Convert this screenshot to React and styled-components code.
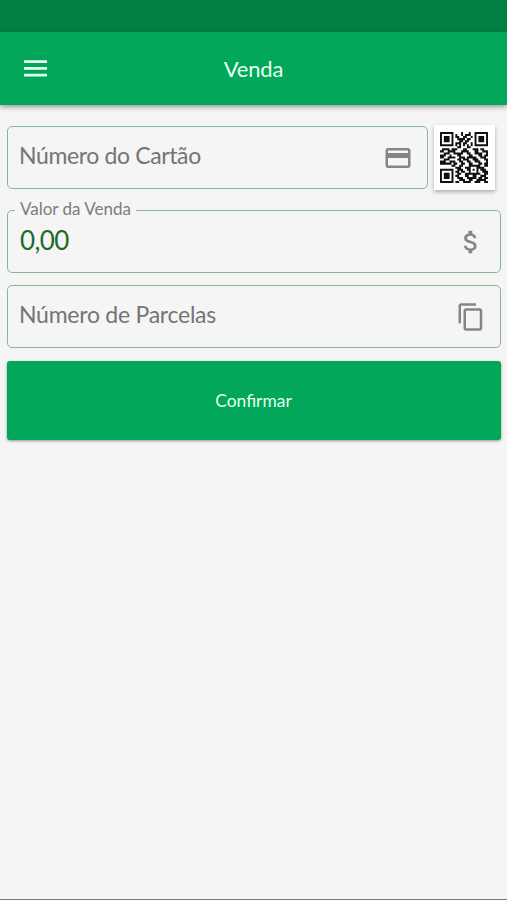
import React from "react";
import styled, { createGlobalStyle } from "styled-components";

const GlobalStyle = createGlobalStyle`
  * { box-sizing: border-box; }
  body { margin: 0; background: #f5f5f5; }
`;

const Screen = styled.div`
  display: flex;
  flex-direction: column;
  height: 900px;
  overflow: hidden;
  background: #f5f5f5;
  border-bottom: 1px solid #777;
  font-family: Lato, "Noto Sans", sans-serif;
`;

const StatusBar = styled.div`
  flex: none;
  height: 32px;
  background: #027f43;
`;

const AppBar = styled.header`
  flex: none;
  display: grid;
  grid-template-columns: 70px 1fr 70px;
  align-items: center;
  height: 73px;
  color: #e6fff0;
  background: #03a759;
  box-shadow: 0 2px 5px rgba(0, 0, 0, 0.38);
`;

const MenuButton = styled.button`
  display: flex;
  justify-content: center;
  padding: 0;
  border: 0;
  background: none;
  color: inherit;
`;

const Title = styled.h1`
  margin: 0;
  text-align: center;
  font-size: 22px;
  line-height: 30px;
  letter-spacing: -0.2px;
  font-weight: 400;
`;

const Form = styled.main`
  display: flex;
  flex-direction: column;
  gap: 12px;
  padding: 21px 6px 0 7px;
`;

const CardRow = styled.div`
  display: flex;
  gap: 6px;
  padding-right: 6px;
  margin-bottom: 9px;
`;

const Field = styled.label`
  position: relative;
  flex: ${(p) => (p.$grow ? "1" : "none")};
  display: flex;
  align-items: center;
  justify-content: space-between;
  height: 63px;
  padding: 0 14px 0 11px;
  border: 1px solid #86b892;
  border-radius: 5px;
  color: #858585;
`;

const FieldText = styled.span`
  padding-bottom: ${(p) => (p.$value ? "4px" : "6px")};
  padding-left: ${(p) => (p.$value ? "1px" : "0")};
  font-size: ${(p) => (p.$value ? "26px" : "23px")};
  line-height: 32px;
  letter-spacing: ${(p) => p.$tracking || "-0.37px"};
  color: ${(p) => (p.$value ? "#24692b" : "#747474")};
  white-space: nowrap;
`;

const FloatingLabel = styled.span`
  position: absolute;
  top: -12px;
  left: 7px;
  padding: 0 5px;
  background: #f5f5f5;
  color: #7d7d7d;
  font-size: 17px;
  line-height: 20px;
  white-space: nowrap;
`;

const QrButton = styled.button`
  flex: none;
  display: flex;
  align-items: center;
  justify-content: center;
  width: 61px;
  height: 65px;
  margin: -1px 0;
  padding: 0 1px 0 0;
  border: 0;
  background: #fff;
  box-shadow: 0 2px 4px rgba(0, 0, 0, 0.3);
`;

const ConfirmButton = styled.button`
  height: 79px;
  margin-top: 1px;
  padding: 0 1px 0 0;
  border: 0;
  border-radius: 3px;
  background: #03a759;
  box-shadow: 0 1px 3px rgba(0, 0, 0, 0.4);
  color: #e6fff0;
  font-family: inherit;
  font-size: 17.4px;
  line-height: 26px;
`;

const Icon = styled.svg`
  flex: none;
  display: block;
  fill: currentColor;
`;

const QR_ROWS = [
  "1111111000010001001111111",
  "1000001010010111001000001",
  "1011101011001100101011101",
  "1011101001111011001011101",
  "1011101000110110001011101",
  "1000001011101100101000001",
  "1111111010101010101111111",
  "0000000001100011000000000",
  "0111101110001100011101100",
  "1100111100011110001100111",
  "0011100111110011001111001",
  "1110010001100001100011011",
  "1100111100111011111001110",
  "0011100001101110011100011",
  "1110011100110011001110001",
  "1111110110011001100011011",
  "0000001100110001111110011",
  "0000000011100111000111100",
  "1111111001110011010101110",
  "1000001011011001000100111",
  "1011101001100111111110011",
  "1011101011000110011001110",
  "1011101001110011111011011",
  "1000001000111001100111110",
  "1111111011001111001110011",
];

const qrPath = QR_ROWS.map((row, y) =>
  [...row].map((cell, x) => (cell === "1" ? `M${x} ${y}h1v1h-1z` : "")).join("")
).join("");

const MenuIcon = () => (
  <Icon width="23" height="17" viewBox="0 0 23 17" aria-hidden="true">
    <path d="M0 .3h23v2.7H0zM0 7.1h23v2.7H0zM0 13.8h23v2.7H0z" />
  </Icon>
);

const CardIcon = () => (
  <Icon width="30" height="30" viewBox="0 0 24 24" aria-hidden="true">
    <path d="M20 4H4c-1.11 0-1.99.89-1.99 2L2 18c0 1.11.89 2 2 2h16c1.11 0 2-.89 2-2V6c0-1.11-.89-2-2-2zm0 14H4v-6h16v6zm0-10H4V6h16v2z" />
  </Icon>
);

const MoneyIcon = () => (
  <Icon width="30" height="30" viewBox="0 0 24 24" aria-hidden="true">
    <path d="M11.8 10.9c-2.27-.59-3-1.2-3-2.15 0-1.09 1.01-1.85 2.7-1.85 1.78 0 2.44.85 2.5 2.1h2.21c-.07-1.72-1.12-3.3-3.21-3.81V3h-3v2.16c-1.94.42-3.5 1.68-3.5 3.61 0 2.31 1.91 3.46 4.7 4.13 2.5.6 3 1.48 3 2.41 0 .69-.49 1.79-2.7 1.79-2.06 0-2.87-.92-2.98-2.1h-2.2c.12 2.19 1.76 3.42 3.68 3.83V21h3v-2.15c1.95-.37 3.5-1.5 3.5-3.55 0-2.84-2.43-3.81-4.7-4.4z" />
  </Icon>
);

const CopyIcon = () => (
  <Icon width="30" height="30" viewBox="0 0 24 24" aria-hidden="true">
    <path d="M16 1H4c-1.1 0-2 .9-2 2v14h2V3h12V1zm3 4H8c-1.1 0-2 .9-2 2v14c0 1.1.9 2 2 2h11c1.1 0 2-.9 2-2V7c0-1.1-.9-2-2-2zm0 16H8V7h11v14z" />
  </Icon>
);

const QrCode = () => (
  <Icon width="48" height="51" viewBox="0 0 25 25" preserveAspectRatio="none" aria-hidden="true">
    <path d={qrPath} fill="#111" />
  </Icon>
);

export default function App() {
  return (
    <>
      <GlobalStyle />
      <Screen>
        <StatusBar />
        <AppBar>
          <MenuButton aria-label="Menu"><MenuIcon /></MenuButton>
          <Title>Venda</Title>
        </AppBar>
        <Form>
          <CardRow>
            <Field $grow>
              <FieldText>Número do Cartão</FieldText>
              <CardIcon />
            </Field>
            <QrButton aria-label="QR Code"><QrCode /></QrButton>
          </CardRow>
          <Field>
            <FloatingLabel>Valor da Venda</FloatingLabel>
            <FieldText $value $tracking="-0.6px">0,00</FieldText>
            <MoneyIcon />
          </Field>
          <Field>
            <FieldText $tracking="-0.25px">Número de Parcelas</FieldText>
            <CopyIcon />
          </Field>
          <ConfirmButton>Confirmar</ConfirmButton>
        </Form>
      </Screen>
    </>
  );
}
